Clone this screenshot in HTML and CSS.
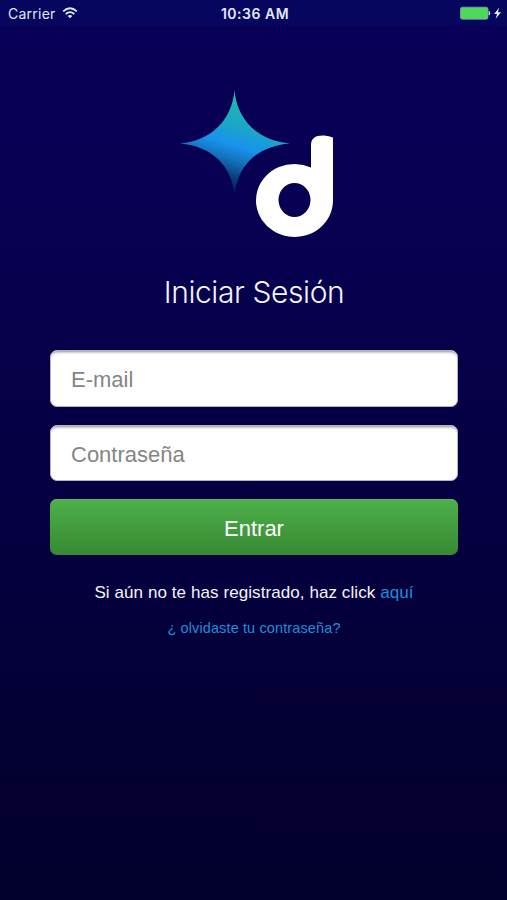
FILE: index.html
```html
<!DOCTYPE html>
<html lang="es">
<head>
    <meta charset="UTF-8">
    <title>Iniciar Sesión</title>
    <link rel="stylesheet" href="styles.css">
</head>
<body>
<header class="status">
    <div class="carrier">
        <span>Carrier</span>
        <svg class="wifi" width="16" height="12" viewBox="0 0 16 12">
            <path d="M1.2 4.3Q8-1.8 14.8 4.3M3.7 7Q8 3.2 12.3 7" fill="none" stroke="#e4e6fa" stroke-width="1.8"/>
            <path d="M5.7 8.9Q8 7.1 10.3 8.9L8 11.3z" fill="#e4e6fa"/>
        </svg>
    </div>
    <div class="time">10:36 AM</div>
    <div class="battery">
        <svg width="42" height="14" viewBox="0 0 42 14">
            <rect x="0.5" y="1.2" width="27.5" height="12" rx="2" fill="#4cd958" stroke="#8c9bb5" stroke-width="0.8"/>
            <path d="M29 5.200q2 2 0 4z" fill="#dfe3f7" stroke="#dfe3f7" stroke-width="0.6"/>
            <path d="M39.200 1.500L34.200 8H37.100L35.700 12.800L41 6.300H37.900z" fill="#f2f3ff"/>
        </svg>
    </div>
</header>
<main class="login">
    <svg class="logo" width="156" height="150" viewBox="0 0 156 150">
        <defs>
            <linearGradient id="star" x1="0.67" y1="0.03" x2="0.37" y2="0.97">
                <stop offset="0" stop-color="#25bda5"/>
                <stop offset="0.32" stop-color="#1ba8c4"/>
                <stop offset="0.53" stop-color="#1893ec"/>
                <stop offset="0.66" stop-color="#1474be"/>
                <stop offset="0.83" stop-color="#0c3a78"/>
                <stop offset="1" stop-color="#080555"/>
            </linearGradient>
        </defs>
        <path d="M54.5 1C57 31 78 52 110 54.5C78 57 57 76 54.5 107C52 76 31 57 0 54.5C31 52 52 31 54.5 1z" fill="url(#star)"/>
        <path d="M131 79V56Q131 46 144 46.500Q149 47 153 48.500V111.500A38.500 36.500 0 1 1 131 78.500zM114.500 94A16 17 0 1 0 114.500 128A16 17 0 1 0 114.500 94z" fill="#fff" fill-rule="evenodd"/>
    </svg>
    <h1>Iniciar Sesión</h1>
    <form class="form">
        <input class="field" type="text" placeholder="E-mail">
        <input class="field" type="password" placeholder="Contraseña">
        <button class="enter" type="button">Entrar</button>
    </form>
    <p class="register">Si aún no te has registrado, haz click <a href="#">aquí</a></p>
    <a class="forgot" href="#">¿ olvidaste tu contraseña?</a>
</main>
</body>
</html>
```

FILE: styles.css
```css
* {
    margin: 0;
    padding: 0;
    box-sizing: border-box;
}

body {
    height: 900px;
    overflow: hidden;
    font-family: "Liberation Sans", Arial, sans-serif;
    color: #f4f4fc;
    background: linear-gradient(#080057 0, #080052 200px, #050042 500px, #030030 800px, #02002d 900px);
}

.status {
    display: grid;
    grid-template-columns: 1fr auto 1fr;
    align-items: center;
    height: 26px;
    padding: 0 5px 0 8px;
    font-family: Inter, sans-serif;
    font-size: 14px;
    color: #e4e6fa;
    background: #06065f;
}

.carrier {
    display: flex;
    align-items: center;
    gap: 6px;
    letter-spacing: 0.25px;
}

.time {
    font-weight: 600;
    letter-spacing: 0.5px;
}

.battery {
    display: flex;
    justify-content: flex-end;
}

.login {
    display: flex;
    flex-direction: column;
    align-items: center;
    padding: 63px 49px 0 50px;
}

.logo {
    margin-left: 8px;
}

h1 {
    margin-top: 32px;
    height: 42px;
    line-height: 42px;
    font-family: Inter, sans-serif;
    font-size: 30px;
    font-weight: 300;
    letter-spacing: -0.4px;
    white-space: nowrap;
}

.form {
    display: flex;
    flex-direction: column;
    gap: 18px;
    width: 100%;
    margin-top: 37px;
}

.field {
    width: 100%;
    height: 56.5px;
    padding: 4px 20px 0;
    border: 1px solid #b5b3c4;
    border-radius: 7px;
    font-family: inherit;
    font-size: 22px;
    background: #fff;
    box-shadow: inset 0 4px 3px -3px #888;
}

.field::placeholder {
    color: #858585;
}

.enter {
    height: 56px;
    padding-top: 4px;
    border: 0;
    border-radius: 7px;
    font-family: inherit;
    font-size: 22px;
    color: #fff;
    background: linear-gradient(#4db04b, #388932);
    box-shadow: inset 0 1px 0 #5cb466;
}

a {
    color: #1b8fdb;
    text-decoration: none;
}

.register {
    margin-top: 28px;
    line-height: 20px;
    font-size: 17px;
    letter-spacing: 0.08px;
    white-space: nowrap;
}

.forgot {
    margin-top: 16px;
    line-height: 18px;
    font-size: 14.5px;
    letter-spacing: 0.12px;
}
```
